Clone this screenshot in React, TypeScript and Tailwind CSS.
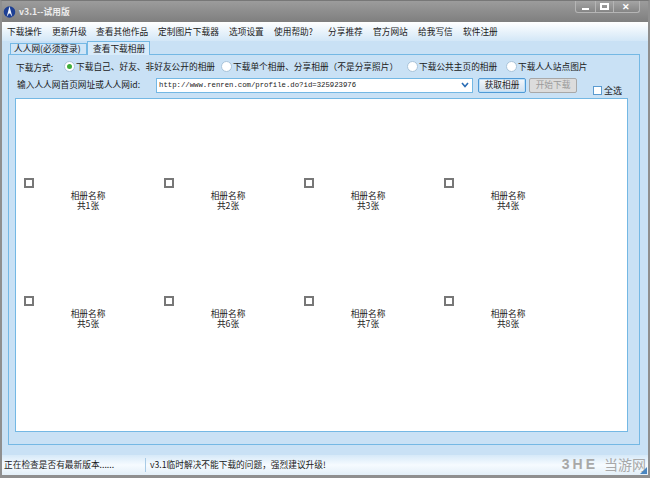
const FONT = { fontFamily: '"Noto Sans CJK SC", "Liberation Sans", sans-serif' };

const menus = [
  ['下载操作', 'w-[45px]'], ['更新升级', 'w-[44px]'], ['查看其他作品', 'w-[62px]'], ['定制图片下载器', 'w-[71px]'],
  ['选项设置', 'w-[45px]'], ['使用帮助?', 'w-[54px]'], ['分享推荐', 'w-[45px]'], ['官方网站', 'w-[45px]'], ['给我写信', 'w-[45px]'], ['软件注册', 'w-[45px]'],
];

function Radio({ label, checked, className }: { label: string; checked?: boolean; className: string }) {
  return (
    <div className={`flex items-center gap-[1px] shrink-0 ${className}`}>
      <span className="w-[11px] h-[11px] rounded-full border border-[#a9c4da] bg-white flex items-center justify-center shrink-0">
        {checked && <span className="w-[5px] h-[5px] rounded-full bg-[#3fae3a]" />}
      </span>
      <span className="whitespace-nowrap">{label}</span>
    </div>
  );
}

function Album({ n }: { n: number }) {
  return (
    <div className="w-[140px] h-[118px] flex flex-col">
      <div className="flex-none w-[10px] h-[10px] border-2 border-[#777] bg-white ml-[8px] mt-[79px]" />
      <div className="ml-[24px] w-[96px] mt-[3px] text-center text-[8.7px] leading-[9.5px] text-[#222]">
        <div>相册名称</div>
        <div>共{n}张</div>
      </div>
    </div>
  );
}

export default function App() {
  return (
    <div style={FONT} className="w-[650px] h-[478px] overflow-hidden relative bg-[#c9e1f5] text-[8.7px] text-[#1a1a1a] flex flex-col border-x-2 border-b-[3px] border-[#8f8f8f] border-t border-t-[#777]">
      <div className="h-[21px] shrink-0 bg-gradient-to-b from-[#9c9c9c] to-[#7f7f7f] flex items-center relative -mx-[2px]">
        <svg width="13" height="14" viewBox="0 0 18 18" className="ml-[3px]">
          <circle cx="9" cy="9" r="8" fill="#1d3f94" />
          <path d="M9 1 L13 16 L9.8 11 L8.2 11 L5 16 Z" fill="#f2f6fb" />
        </svg>
        <span className="ml-[3px] text-[8.7px] font-bold text-[#ececec]">v3.1--试用版</span>
        <div className="absolute right-[10px] top-0 h-[12px] w-[65px] flex border border-[#b5b5b5] border-t-0 rounded-b-[3px] bg-gradient-to-b from-[#a5a5a5] to-[#858585] text-white">
          <span className="flex-[1.1] flex items-end justify-center pb-[2px]"><span className="w-[7px] h-[2px] bg-white" /></span>
          <span className="flex-1 flex items-center justify-center border-x border-[#b5b5b5]"><span className="w-[9px] h-[7px] border-2 border-white" /></span>
          <span className="flex-[1.5] flex items-center justify-center text-[9px] font-bold leading-none">✕</span>
        </div>
      </div>
      <div className="h-[19px] shrink-0 bg-gradient-to-b from-white to-[#d3e7f7] flex items-center pl-[6px] -ml-[1px]">
        {menus.map(([m, w]) => (
          <span key={m} className={`whitespace-nowrap shrink-0 ${w}`}>{m}</span>
        ))}
      </div>
      <div className="flex h-[13px] shrink-0 ml-[8px] items-end relative z-10">
        <div className="h-[11px] w-[77px] flex items-center pl-[3px] border border-b-0 border-[#74b8e4] bg-[#cfe5f7]">人人网(必须登录)</div>
        <div className="h-[14px] w-[63px] flex items-center pl-[5px] border border-b-0 border-[#74b8e4] bg-[#d8ebfa] -mb-px">查看下载相册</div>
      </div>
      <div className="ml-[6px] w-[632px] h-[391px] shrink-0 border border-[#74b8e4] bg-[#c9e1f5] flex flex-col px-[6px]">
        <div className="h-[18px] mt-[3px] flex items-center shrink-0">
          <span className="w-[48px] ml-[1px] mt-[2px]">下载方式:</span>
          <Radio label="下载自己、好友、非好友公开的相册" checked className="w-[157px]" />
          <Radio label="下载单个相册、分享相册（不是分享照片）" className="w-[186px]" />
          <Radio label="下载公共主页的相册" className="w-[99px]" />
          <Radio label="下载人人站点图片" className="w-[90px]" />
        </div>
        <div className="h-[18px] flex items-center shrink-0 relative">
          <span className="ml-[2px] w-[139px] whitespace-nowrap">输入人人网首页网址或人人网id:</span>
          <div className="w-[317px] h-[15px] bg-white border border-[#74b8e4] flex items-center justify-between pl-[2px] pr-[3px]">
            <span style={{ fontFamily: '"Liberation Mono", monospace' }} className="text-[7.3px] whitespace-nowrap">http://www.renren.com/profile.do?id=325923976</span>
            <svg width="8" height="6" viewBox="0 0 8 6"><path d="M1 1 L4 4.5 L7 1" fill="none" stroke="#2a6db5" strokeWidth="1.6" /></svg>
          </div>
          <div className="ml-[5px] w-[48px] h-[15px] border border-[#4f9ad6] rounded-[2px] bg-gradient-to-b from-[#f4f8fc] to-[#cfdfee] flex items-center justify-center shadow-[inset_0_0_0_1px_#bfe0f8]">获取相册</div>
          <div className="ml-[3px] w-[48px] h-[15px] border border-[#a8a8a8] rounded-[2px] bg-[#dcdcdc] flex items-center justify-center text-[#9a9a9a]">开始下载</div>
          <div className="flex items-center gap-[2px] ml-[16px] mt-[11px]">
            <span className="w-[9px] h-[9px] border border-[#5b9bd0] bg-white" />
            <span className="text-[9px]">全选</span>
          </div>
        </div>
        <div className="mt-[4px] w-[613px] h-[334px] ml-0 border border-[#74b8e4] bg-white flex flex-wrap content-start shrink-0">
          {[1, 2, 3, 4, 5, 6, 7, 8].map((n) => <Album key={n} n={n} />)}
        </div>
      </div>
      <div className="flex-1 min-h-0 flex flex-col justify-end -ml-[1px]">
        <div className="h-[20px] bg-gradient-to-b from-[#d6e9f8] via-[#f6fbff] to-[#e3eff8] flex items-center relative">
          <span className="pl-[3px] w-[144px]">正在检查是否有最新版本......</span>
          <span className="w-px h-[14px] bg-[#a8cbe6]" />
          <span className="pl-[4px]">v3.1临时解决不能下载的问题，强烈建议升级!</span>
          <span className="absolute right-[2px] top-0 flex items-center gap-[6px] text-[#a8a8a8] font-bold whitespace-nowrap">
            <span className="text-[14px] leading-[18px] tracking-[3px]" style={{ fontFamily: '"Liberation Sans", sans-serif' }}>3HE</span>
            <span className="text-[14px] leading-[18px] font-normal">当游网</span>
          </span>
          <svg width="7" height="7" viewBox="0 0 7 7" className="absolute right-[1px] bottom-[1px]"><path d="M7 0V7H0Z" fill="#4a86c0" /></svg>
        </div>
      </div>
    </div>
  );
}
